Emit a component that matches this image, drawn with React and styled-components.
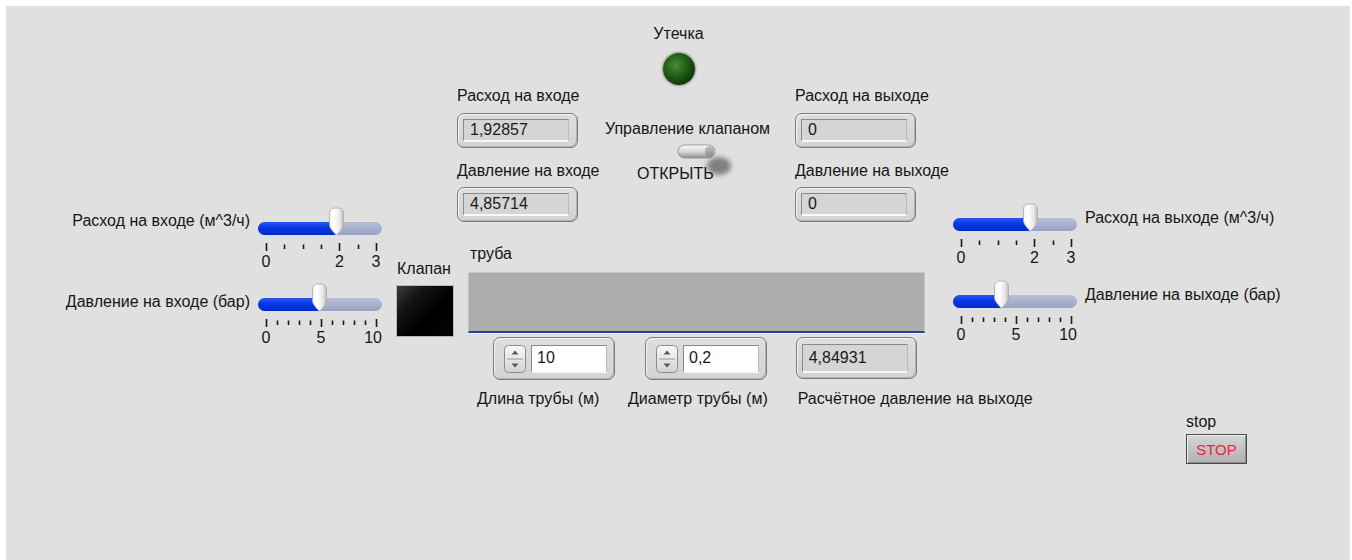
import React from "react";
import styled, { createGlobalStyle } from "styled-components";

const GlobalStyle = createGlobalStyle`
  html, body { margin: 0; padding: 0; background: #ffffff; }
  body { font-family: "Liberation Sans", Arial, sans-serif; color: #161616; }
`;

/* ---------- panel & generic text ---------- */

const Panel = styled.main`
  box-sizing: border-box;
  margin: 6px 2px 0 6px;
  height: 554px;
  padding-left: 34px;
  background: #e0e0e0;
  display: flex;
  align-items: flex-start;
  overflow: hidden;
`;

const Text = styled.div`
  flex: none;
  font-size: 16px;
  line-height: 18px;
  white-space: nowrap;
  color: #161616;
  width: ${({ $w }) => ($w ? `${$w}px` : "auto")};
  text-align: ${({ $align = "left" }) => $align};
  margin-top: ${({ $mt = 0 }) => $mt}px;
  margin-left: ${({ $ml = 0 }) => $ml}px;
`;

/* ---------- sliders ---------- */

const SliderColumn = styled.section`
  flex: none;
  display: flex;
  flex-direction: column;
  width: ${({ $w }) => $w}px;
  padding-top: ${({ $top }) => $top}px;
  gap: ${({ $gap }) => $gap}px;
`;

const SliderRow = styled.div`
  display: flex;
  align-items: flex-start;
  gap: 8px;
`;

const SliderBlock = styled.div`
  position: relative;
  flex: none;
  width: 124px;
  padding-top: 16px;
`;

const Track = styled.div`
  height: 13px;
  border-radius: 7px;
  overflow: hidden;
  background: linear-gradient(#b6bfd8, #a5afcc 60%, #99a4c4);
`;

const Fill = styled.div`
  height: 100%;
  background: linear-gradient(#2b58f3, #0636e6 45%, #022cc6);
`;

const Thumb = styled.svg`
  position: absolute;
  top: 1px;
`;

const ScaleSvg = styled.svg`
  display: block;
  margin-top: 8px;
  overflow: visible;
`;

const ScaleText = styled.text`
  font-family: "Liberation Sans", Arial, sans-serif;
  font-size: 16px;
  fill: #161616;
`;

const SCALE_OFFSET = 8;
const SCALE_LEN = 110;
const BLOCK_W = 124;

function Slider({ value, max, step, marks }) {
  const pos = (v) => SCALE_OFFSET + (v / max) * SCALE_LEN;
  const ticks = [];
  for (let v = 0; v <= max + 1e-9; v += step) ticks.push(+v.toFixed(3));
  const knob = pos(value);
  return (
    <SliderBlock>
      <Track>
        <Fill style={{ width: `${knob}px` }} />
      </Track>
      <Thumb style={{ left: `${knob - 8.5}px` }} width="17" height="29" viewBox="0 0 17 29">
        <defs>
          <linearGradient id="knobShade" x1="0" y1="0" x2="1" y2="0">
            <stop offset="0" stopColor="#f4f4f4" />
            <stop offset="0.35" stopColor="#ffffff" />
            <stop offset="0.75" stopColor="#e6e6e6" />
            <stop offset="1" stopColor="#b8b8b8" />
          </linearGradient>
        </defs>
        <path
          d="M1.5 6 C1.5 2.5 4 1 8.5 1 C13 1 15.5 2.5 15.5 6 V17.5 C15.5 22 11 25 8.5 28.5 C6 25 1.5 22 1.5 17.5 Z"
          fill="url(#knobShade)"
          stroke="#aaaaaa"
          strokeWidth="0.8"
        />
      </Thumb>
      <ScaleSvg width={BLOCK_W} height="30">
        {ticks.map((v) => {
          const major = marks.includes(v);
          const x = Math.round(pos(v)) + 0.5;
          return (
            <line
              key={v}
              x1={x}
              x2={x}
              y1={major ? 0 : 1.5}
              y2={major ? 8 : 6}
              stroke="#1a1a1a"
              strokeWidth="1.6"
            />
          );
        })}
        {marks.map((v, i) => {
          const wide = String(v).length > 1 && i === marks.length - 1;
          return (
            <ScaleText key={v} x={wide ? BLOCK_W : pos(v)} y="24" textAnchor={wide ? "end" : "middle"}>
              {v}
            </ScaleText>
          );
        })}
      </ScaleSvg>
    </SliderBlock>
  );
}

/* ---------- numeric frames ---------- */

const Frame = styled.div`
  box-sizing: border-box;
  flex: none;
  width: ${({ $w = 121 }) => $w}px;
  height: ${({ $h }) => $h}px;
  margin-top: ${({ $mt = 0 }) => $mt}px;
  margin-left: ${({ $ml = 0 }) => $ml}px;
  padding: 0 ${({ $pr = 8 }) => $pr}px 0 ${({ $pl = 5 }) => $pl}px;
  display: flex;
  align-items: center;
  gap: 5px;
  border: 1px solid #7c7c7c;
  border-radius: 7px;
  background: linear-gradient(#dedede, #d3d3d3);
  box-shadow: inset 1px 1px 0 #f4f4f4, inset -1px -1px 0 #b2b2b2;
`;

const Field = styled.div`
  box-sizing: border-box;
  flex: 1;
  height: ${({ $h }) => $h}px;
  padding-left: ${({ $editable }) => ($editable ? 5 : 6)}px;
  display: flex;
  align-items: center;
  font-size: 16px;
  color: #1a1a1a;
  background: ${({ $editable }) => ($editable ? "#ffffff" : "#d5d5d5")};
  border: 1px solid #8a8a8a;
  border-right-color: #bababa;
  border-bottom: 2px solid #f8f8f8;
`;

function Indicator({ value, h, fieldH, mt, ml, w }) {
  return (
    <Frame $h={h} $mt={mt} $ml={ml} $w={w}>
      <Field $h={fieldH}>{value}</Field>
    </Frame>
  );
}

const SpinSvg = styled.svg`
  flex: none;
  display: block;
`;

function SpinButtons() {
  return (
    <SpinSvg width="22" height="28" viewBox="0 0 22 28">
      <defs>
        <linearGradient id="spinFace" x1="0" y1="0" x2="0" y2="1">
          <stop offset="0" stopColor="#fafafa" />
          <stop offset="1" stopColor="#d2d2d2" />
        </linearGradient>
      </defs>
      <rect x="0.5" y="0.5" width="21" height="27" rx="4" fill="url(#spinFace)" stroke="#8c8c8c" />
      <line x1="3" x2="19" y1="14" y2="14" stroke="#9a9a9a" />
      <path d="M7.5 9.5 L11 5.5 L14.5 9.5 Z" fill="#5a5a5a" />
      <path d="M7.5 18.5 L11 22.5 L14.5 18.5 Z" fill="#5a5a5a" />
    </SpinSvg>
  );
}

function Spinner({ value, ml }) {
  return (
    <Frame $h={43} $pl={10} $pr={7} $ml={ml} $w={122}>
      <SpinButtons />
      <Field $h={28} $editable>
        {value}
      </Field>
    </Frame>
  );
}

/* ---------- center block ---------- */

const Center = styled.section`
  flex: none;
  width: 556px;
  margin-left: 15px;
  padding-top: 19px;
  display: flex;
  flex-direction: column;
`;

const TopArea = styled.div`
  display: flex;
  align-items: flex-start;
  padding-left: 60px;
`;

const IndicatorColumn = styled.div`
  flex: none;
  width: ${({ $w }) => $w}px;
  padding-top: 62px;
  display: flex;
  flex-direction: column;
  align-items: flex-start;
`;

const MidColumn = styled.div`
  flex: none;
  width: 190px;
  display: flex;
  flex-direction: column;
  align-items: flex-start;
`;

const LedGroup = styled.div`
  width: 61px;
  margin-left: 43px;
  display: flex;
  flex-direction: column;
  align-items: center;
`;

const Led = styled.div`
  width: 32px;
  height: 32px;
  margin-top: 10px;
  border-radius: 50%;
  background: radial-gradient(circle at 40% 38%, #4d8a3c 0%, #2a6a1d 30%, #124509 62%, #062203 100%);
  box-shadow: 0 0 2px 1px rgba(60, 60, 60, 0.45);
`;

const ToggleSvg = styled.svg`
  display: block;
  flex: none;
  margin-top: 5px;
  margin-left: 71px;
  overflow: visible;
`;

const PipeArea = styled.div`
  display: flex;
  align-items: flex-start;
`;

const ValveColumn = styled.div`
  flex: none;
  width: 56px;
  padding-top: 38px;
  display: flex;
  flex-direction: column;
`;

const ValveLamp = styled.div`
  width: 56px;
  height: 50px;
  margin-top: 8px;
  background: linear-gradient(135deg, #3c3c3c 0%, #111111 30%, #000000 60%, #050505 100%);
  box-shadow: 0 0 0 1px #b8b8b8;
`;

const PipeColumn = styled.div`
  flex: none;
  margin-left: 15px;
  padding-top: 23px;
  display: flex;
  flex-direction: column;
`;

const Pipe = styled.div`
  box-sizing: border-box;
  width: 457px;
  height: 61px;
  margin-top: 9px;
  background: #adadad;
  border-top: 1px solid #c8c8c8;
  border-left: 1px solid #c2c2c2;
  border-right: 1px solid #c2c2c2;
  border-bottom: 2px solid #27409c;
  box-shadow: 0 1px 0 #f2f2f2;
`;

const BottomRow = styled.div`
  display: flex;
  align-items: flex-start;
  margin-top: 1px;
`;

const ControlGroup = styled.div`
  flex: none;
  display: flex;
  flex-direction: column;
  align-items: flex-start;
  margin-left: ${({ $ml }) => $ml}px;
`;

/* ---------- stop ---------- */

const StopGroup = styled.div`
  display: flex;
  flex-direction: column;
  align-items: flex-start;
  margin-top: 57px;
  margin-left: 233px;
`;

const StopButton = styled.button`
  box-sizing: border-box;
  width: 61px;
  height: 30px;
  margin-top: 3px;
  padding: 0;
  border: 1px solid #4a4a4a;
  background: linear-gradient(#d6d6d6, #bfbfbf 60%, #b2b2b2);
  box-shadow: inset 1px 1px 0 #f0f0f0, inset -1px -1px 0 #8c8c8c;
  font-family: "Liberation Sans", Arial, sans-serif;
  font-size: 15px;
  color: #ee1f3e;
  cursor: pointer;
`;

export default function App() {
  return (
    <>
      <GlobalStyle />
      <Panel>
        <SliderColumn $w={342} $top={200} $gap={9}>
          <SliderRow>
            <Text $w={210} $align="right" $mt={6}>
              Расход на входе (м^3/ч)
            </Text>
            <Slider value={1.92857} max={3} step={0.5} marks={[0, 2, 3]} />
          </SliderRow>
          <SliderRow>
            <Text $w={210} $align="right" $mt={11}>
              Давление на входе (бар)
            </Text>
            <Slider value={4.85714} max={10} step={1} marks={[0, 5, 10]} />
          </SliderRow>
        </SliderColumn>

        <Center>
          <TopArea>
            <IndicatorColumn $w={148}>
              <Text>Расход на входе</Text>
              <Indicator value="1,92857" h={35} fieldH={23} mt={8} />
              <Text $mt={14}>Давление на входе</Text>
              <Indicator value="4,85714" h={35} fieldH={23} mt={7} />
            </IndicatorColumn>

            <MidColumn>
              <LedGroup>
                <Text>Утечка</Text>
                <Led />
              </LedGroup>
              <Text $mt={35}>Управление клапаном</Text>
              <ToggleSvg width="60" height="22" viewBox="0 0 60 22">
                <defs>
                  <linearGradient id="leverFace" x1="0" y1="0" x2="0" y2="1">
                    <stop offset="0" stopColor="#fcfcfc" />
                    <stop offset="0.5" stopColor="#d8d8d8" />
                    <stop offset="1" stopColor="#8f8f8f" />
                  </linearGradient>
                  <filter id="leverShadow" x="-60%" y="-60%" width="220%" height="220%">
                    <feGaussianBlur stdDeviation="2.8" />
                  </filter>
                </defs>
                <ellipse cx="43" cy="23" rx="12" ry="9" fill="#5e5e5e" opacity="0.75" filter="url(#leverShadow)" />
                <rect x="2" y="2" width="37" height="13" rx="6.5" fill="url(#leverFace)" stroke="#8a8a8a" strokeWidth="0.8" />
                <ellipse cx="33.5" cy="8.5" rx="4.5" ry="5.5" fill="#6e6e6e" opacity="0.45" />
              </ToggleSvg>
              <Text $ml={32}>ОТКРЫТЬ</Text>
            </MidColumn>

            <IndicatorColumn $w={160}>
              <Text>Расход на выходе</Text>
              <Indicator value="0" h={35} fieldH={23} mt={8} />
              <Text $mt={14}>Давление на выходе</Text>
              <Indicator value="0" h={35} fieldH={23} mt={7} />
            </IndicatorColumn>
          </TopArea>

          <PipeArea>
            <ValveColumn>
              <Text>Клапан</Text>
              <ValveLamp />
            </ValveColumn>
            <PipeColumn>
              <Text $ml={2}>труба</Text>
              <Pipe />
            </PipeColumn>
          </PipeArea>

          <BottomRow>
            <ControlGroup $ml={80}>
              <Spinner value="10" ml={16} />
              <Text $mt={10}>Длина трубы (м)</Text>
            </ControlGroup>
            <ControlGroup $ml={13}>
              <Spinner value="0,2" ml={17} />
              <Text $mt={10}>Диаметр трубы (м)</Text>
            </ControlGroup>
            <ControlGroup $ml={28}>
              <Indicator value="4,84931" h={42} fieldH={29} />
              <Text $mt={11} $ml={2}>
                Расчётное давление на выходе
              </Text>
            </ControlGroup>
          </BottomRow>
        </Center>

        <SliderColumn $w={360} $top={196} $gap={10}>
          <SliderRow>
            <Slider value={1.9} max={3} step={0.5} marks={[0, 2, 3]} />
            <Text $mt={7}>Расход на выходе (м^3/ч)</Text>
          </SliderRow>
          <SliderRow>
            <Slider value={3.7} max={10} step={1} marks={[0, 5, 10]} />
            <Text $mt={7}>Давление на выходе (бар)</Text>
          </SliderRow>
          <StopGroup>
            <Text>stop</Text>
            <StopButton type="button">STOP</StopButton>
          </StopGroup>
        </SliderColumn>
      </Panel>
    </>
  );
}
